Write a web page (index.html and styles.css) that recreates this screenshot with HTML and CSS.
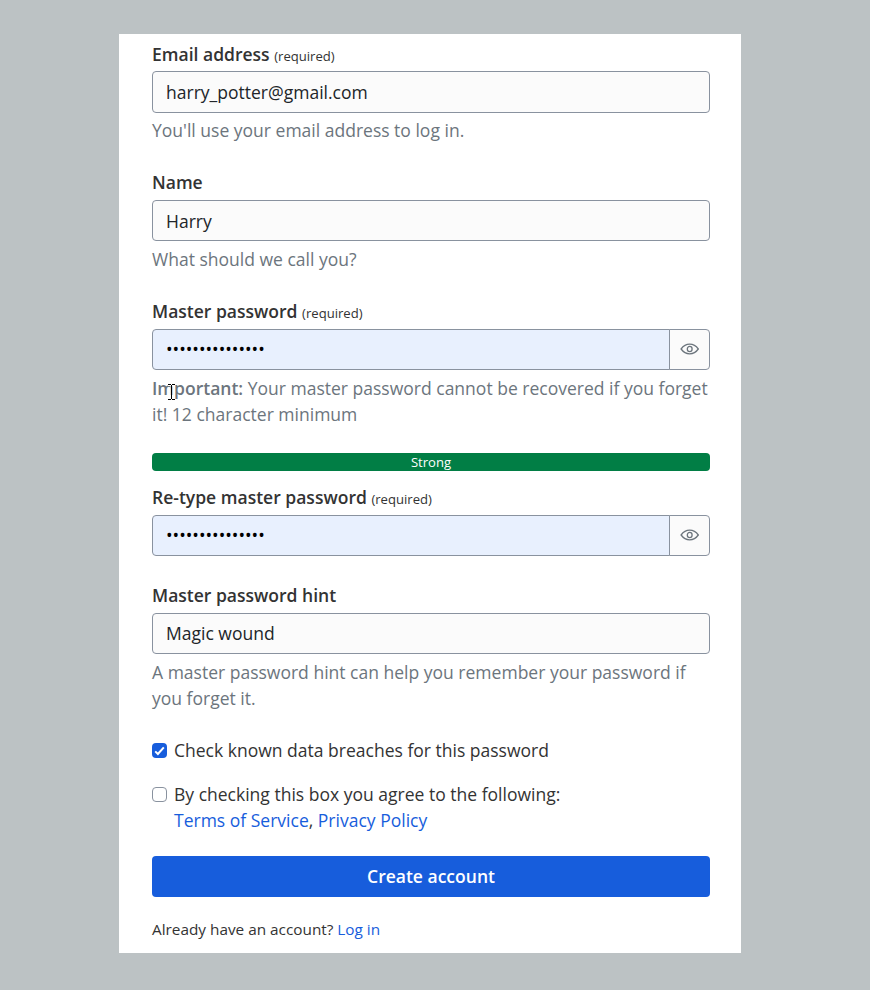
FILE: index.html
```html
<!DOCTYPE html>
<html lang="en">
<head>
<meta charset="utf-8">
<title>Create account</title>
<link rel="stylesheet" href="styles.css">
</head>
<body>
<form class="card">
  <div class="field first">
    <label class="label" for="email">Email address <small>(required)</small></label>
    <input class="input tall" id="email" type="text" value="harry_potter@gmail.com">
    <p class="help short">You'll use your email address to log in.</p>
  </div>
  <div class="field">
    <label class="label" for="name">Name</label>
    <input class="input" id="name" type="text" value="Harry">
    <p class="help">What should we call you?</p>
  </div>
  <div class="field master">
    <label class="label" for="pw">Master password <small>(required)</small></label>
    <div class="group">
      <input class="input filled" id="pw" type="password" value="wingardiumlevio">
      <button class="toggle" type="button" aria-label="Show password">
        <svg width="20" height="14" viewBox="0 0 20 14"><path d="M1.100 7C5.700 .6 13.700 .6 18.300 7C13.700 13.400 5.700 13.400 1.100 7Z"/><ellipse cx="9.700" cy="7" rx="2.400" ry="2.600"/></svg>
      </button>
    </div>
    <p class="help"><b>Important:</b> Your master password cannot be recovered if you forget it! 12 character minimum</p>
    <svg class="cursor" width="9" height="16" viewBox="0 0 9 16"><path class="halo" d="M1 1H8M4.500 1V15M1 15H8"/><path class="stem" d="M1 .5H4M5 .5H8M4.500 1V15M1 15.500H4M5 15.500H8"/></svg>
  </div>
  <div class="strength">Strong</div>
  <div class="field">
    <label class="label" for="pw2">Re-type master password <small>(required)</small></label>
    <div class="group">
      <input class="input filled" id="pw2" type="password" value="wingardiumlevio">
      <button class="toggle" type="button" aria-label="Show password">
        <svg width="20" height="14" viewBox="0 0 20 14"><path d="M1.100 7C5.700 .6 13.700 .6 18.300 7C13.700 13.400 5.700 13.400 1.100 7Z"/><ellipse cx="9.700" cy="7" rx="2.400" ry="2.600"/></svg>
      </button>
    </div>
  </div>
  <div class="field">
    <label class="label" for="hint">Master password hint</label>
    <input class="input raised" id="hint" type="text" value="Magic wound">
    <p class="help">A master password hint can help you remember your password if you forget it.</p>
  </div>
  <div class="check">
    <span class="box checked"><svg width="15" height="15" viewBox="0 0 15 15"><path d="M3.200 8.400L5.900 11L11.800 4.300"/></svg></span>
    <span>Check known data breaches for this password</span>
  </div>
  <div class="check terms">
    <span class="box"></span>
    <span>By checking this box you agree to the following:<br><a href="#">Terms of Service</a>, <a href="#">Privacy Policy</a></span>
  </div>
  <button class="submit" type="button">Create account</button>
  <p class="login">Already have an account? <a href="#">Log in</a></p>
</form>
</body>
</html>
```
FILE: styles.css
```css
* {
  box-sizing: border-box;
}

body {
  margin: 0;
  padding: 34px 0 0 119px;
  background: #bcc2c4;
  color: #333;
  font: 17.52px/26px "Open Sans", sans-serif;
}

.card {
  width: 622px;
  height: 919px;
  padding: 7px 31px 0 33px;
  background: #fff;
}

.field {
  margin-bottom: 26px;
}

.label {
  display: block;
  height: 26px;
  margin-bottom: 5px;
  font-weight: 600;
}

.first .label {
  margin-bottom: 4px;
}

.label small {
  font-size: 13.100px;
  font-weight: 400;
  line-height: 1;
}

.input {
  display: block;
  width: 100%;
  height: 41px;
  padding: 0 13px;
  border: 1px solid #89929f;
  border-radius: 4px;
  background: #fbfbfb;
  color: #212529;
  font: inherit;
  outline: none;
}

.tall {
  height: 42px;
}

.help {
  margin: 5px 0 0;
  color: #6c757d;
}

.help b {
  font-weight: 600;
}

.short {
  margin-top: 4px;
}

.group {
  display: flex;
}

.filled {
  flex: 1;
  min-width: 0;
  border-radius: 4px 0 0 4px;
  background: #e8f0fe;
  color: #000;
}

.filled,
.raised {
  padding-bottom: 2px;
}

.toggle {
  display: flex;
  align-items: center;
  justify-content: center;
  width: 41px;
  margin-left: -1px;
  padding: 0 0 1px;
  border: 1px solid #89929f;
  border-radius: 0 4px 4px 0;
  background: #fbfbfb;
}

.toggle svg {
  fill: none;
  stroke: #6c757d;
  stroke-width: 1.3;
}

.master {
  position: relative;
}

.cursor {
  position: absolute;
  left: 15px;
  top: 86px;
  fill: none;
}

.halo {
  stroke: #fff;
  stroke-width: 2;
}

.stem {
  stroke: #000;
}

.strength {
  height: 18px;
  margin-bottom: 13px;
  border-radius: 4px;
  background: #017e45;
  color: #fff;
  font-size: 13.100px;
  line-height: 18px;
  text-align: center;
}

.check {
  display: flex;
  gap: 7px;
  margin-bottom: 18px;
}

.box {
  flex: none;
  width: 15px;
  height: 15px;
  margin-top: 6px;
  border: 1px solid #89929f;
  border-radius: 4px;
}

.checked {
  border: 0;
  background: #175ddc;
}

.box svg {
  display: block;
  fill: none;
  stroke: #fff;
  stroke-width: 2;
}

.terms {
  margin-bottom: 23px;
}

a {
  color: #175ddc;
  text-decoration: none;
}

.submit {
  display: block;
  width: 100%;
  height: 41px;
  padding: 0 0 2px;
  border: 0;
  border-radius: 4px;
  background: #175ddc;
  color: #fff;
  font: inherit;
  font-weight: 600;
}

.login {
  margin: 19px 0 0;
  font-size: 15.330px;
}
```
